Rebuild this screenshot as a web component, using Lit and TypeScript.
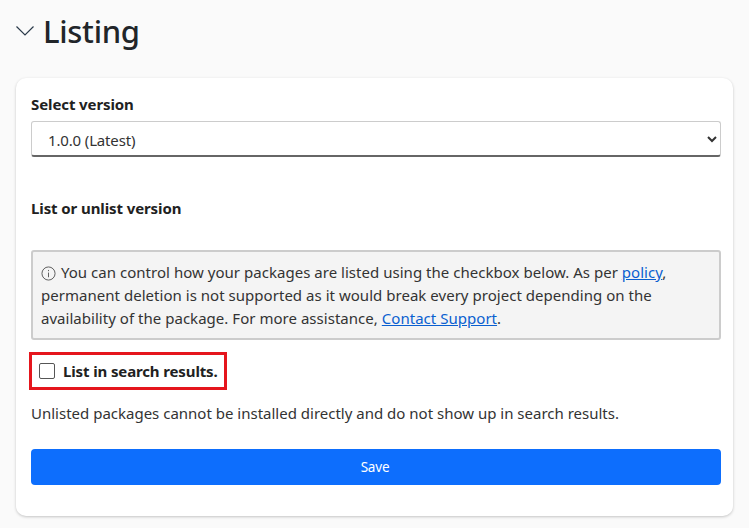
import { LitElement, html, css } from "lit";
import { customElement } from "lit/decorators.js";

@customElement("app-root")
export class AppRoot extends LitElement {
  static styles = css`
    :host { display: block; width: 749px; height: 528px; overflow: hidden; background: #fafafa; box-sizing: border-box; padding: 0 16px; font-family: "Noto Sans", "Open Sans", sans-serif; color: #212121; font-size: 15px; }
    * { box-sizing: border-box; }
    .head { height: 78px; display: flex; align-items: flex-start; padding-top: 10px; gap: 9px; }
    .head svg { margin-top: 16px; flex: none; }
    h1 { margin: 0; font-size: 31px; line-height: 42px; font-weight: 500; letter-spacing: -0.3px; color: #212529; }
    .card { width: 717px; height: 438px; background: #fff; border-radius: 10px; box-shadow: 0 1px 3px rgba(0,0,0,.22); padding: 15px; display: flex; flex-direction: column; }
    .lbl { font-weight: 700; font-size: 15px; line-height: 22px; letter-spacing: -0.1px; }
    .sel { margin-top: 6px; width: 690px; height: 36px; border: 1px solid #ccc; border-bottom: 2px solid #666; border-radius: 3px; background: #fff; padding: 2px 0 0 12px; font: inherit; font-size: 15px; letter-spacing: -0.15px; color: #333; }
    .lbl2 { margin-top: 40px; }
    .note { margin-top: 31px; width: 690px; height: 90px; background: #f4f4f4; border: 2px solid #ccc; border-radius: 3px; padding: 9px 8px; font-size: 15px; line-height: 23px; letter-spacing: 0.03px; color: #333; }
    .note svg { vertical-align: -3px; margin-right: 1px; }
    a { color: #0a5fd0; text-decoration: underline; }
    .hl { margin: 12px 0 0 -2px; width: 198px; height: 38px; border: 3px solid #e5161d; display: flex; align-items: center; padding-left: 7px; gap: 8px; font-weight: 700; font-size: 15px; letter-spacing: -0.13px; }
    .cb { appearance: none; margin: 0; width: 16px; height: 16px; border: 1px solid #555; border-radius: 2px; background: #fff; flex: none; }
    .hint { margin-top: 12px; font-size: 15px; line-height: 22px; color: #333; }
    .save { margin-top: 25px; width: 690px; height: 36px; border: 0; border-radius: 4px; background: #0d6efd; color: #fff; font: inherit; font-size: 13.5px; letter-spacing: -0.2px; padding: 0 2px 0 0; }
  `;

  render() {
    return html`
      <div class="head">
        <svg width="18" height="10" viewBox="0 0 18 10" fill="none" stroke="#2b3a4a" stroke-width="1.2"><path d="M0.5 0.5 L9 9 L17.5 0.5"/></svg>
        <h1>Listing</h1>
      </div>
      <div class="card">
        <div class="lbl">Select version</div>
        <select class="sel"><option>1.0.0 (Latest)</option></select>
        <div class="lbl lbl2">List or unlist version</div>
        <div class="note">
          <svg width="15" height="15" viewBox="0 0 16 16" fill="none" stroke="#555" stroke-width="1"><circle cx="8" cy="8" r="7"/><path d="M8 7v5M8 4.2v1.3"/></svg>
          You can control how your packages are listed using the checkbox below. As per <a href="#">policy</a>,
          permanent deletion is not supported as it would break every project depending on the
          availability of the package. For more assistance, <a href="#">Contact Support</a>.
        </div>
        <label class="hl"><input class="cb" type="checkbox" /><span>List in search results.</span></label>
        <div class="hint">Unlisted packages cannot be installed directly and do not show up in search results.</div>
        <button class="save">Save</button>
      </div>
    `;
  }
}
